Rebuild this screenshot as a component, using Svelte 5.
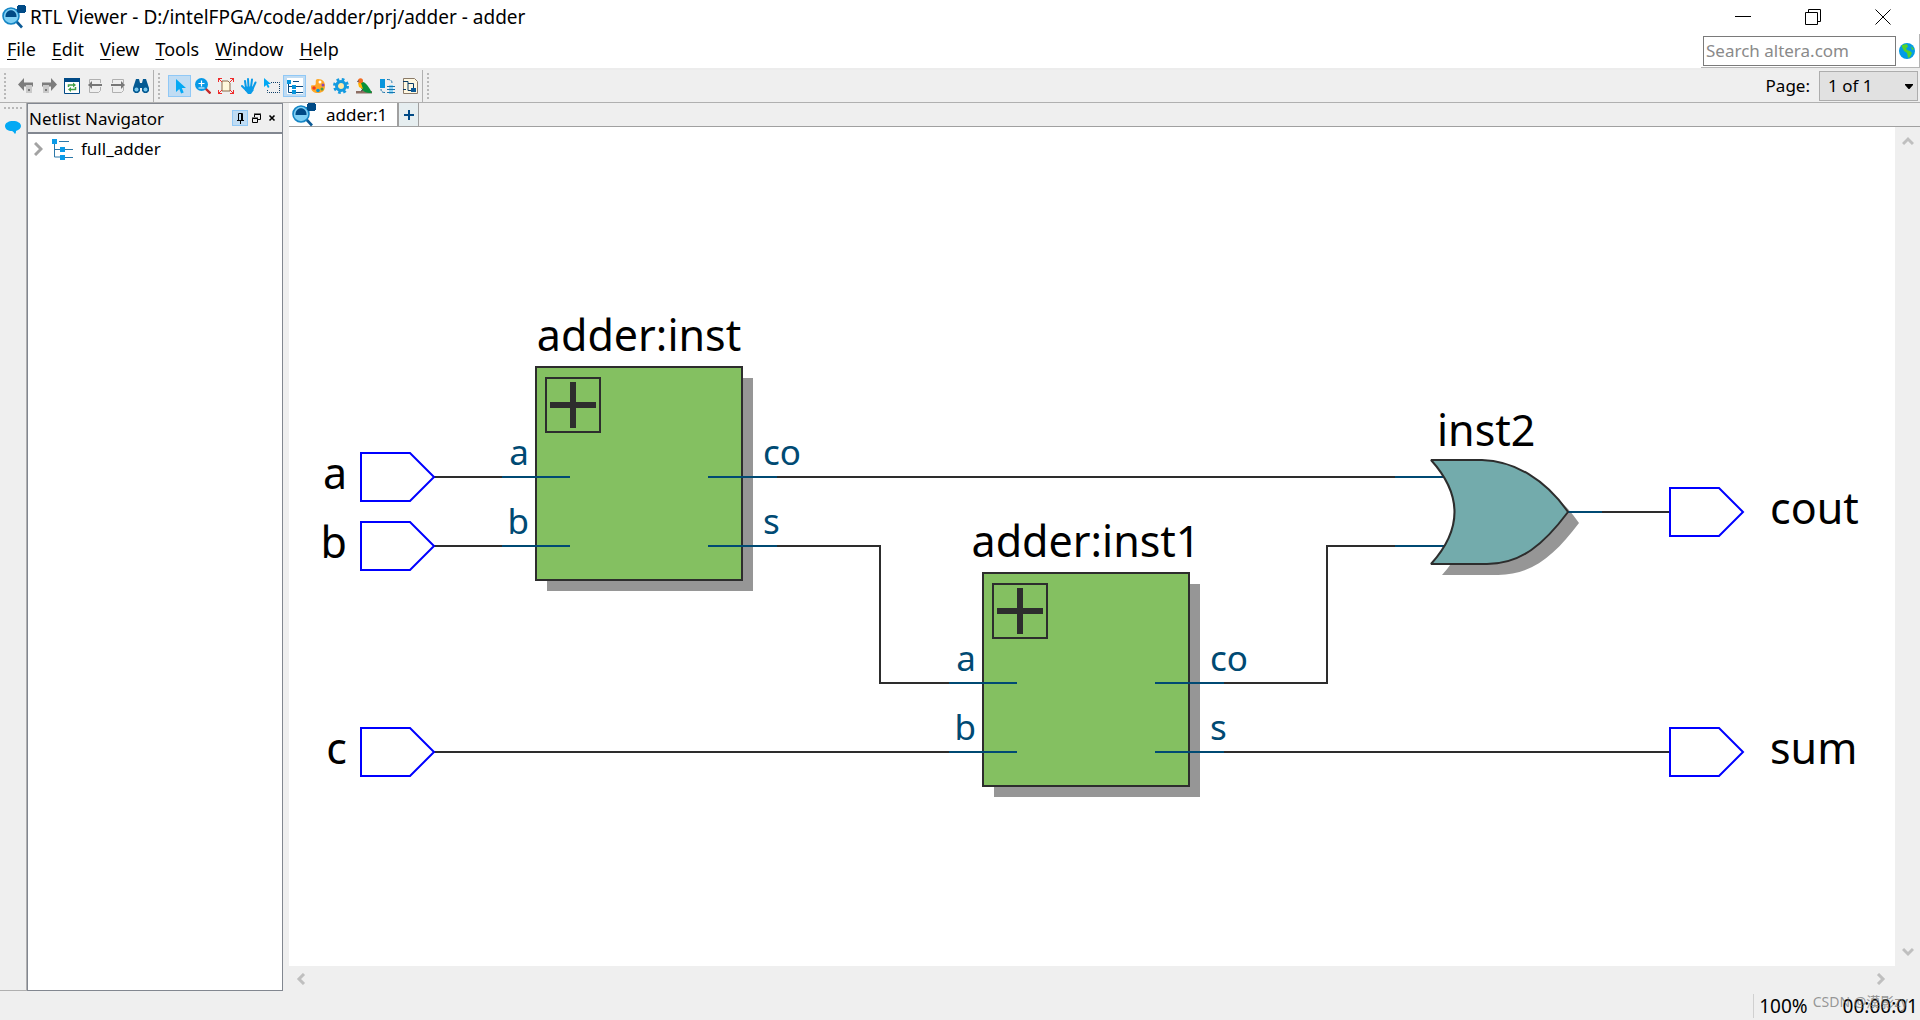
<script>
	let query = $state('');
	let page = $state('1 of 1');
	let activeTool = $state('select');
	let treeShown = $state(true);

	const menus = ['File', 'Edit', 'View', 'Tools', 'Window', 'Help'];

	const navTools = [
		{ id: 'back', label: 'Back' },
		{ id: 'forward', label: 'Forward' },
		{ id: 'refresh', label: 'Refresh' },
		{ id: 'prev', label: 'Previous page' },
		{ id: 'next', label: 'Next page' },
		{ id: 'find', label: 'Find' }
	];

	const viewTools = [
		{ id: 'select', label: 'Selection tool' },
		{ id: 'zoom', label: 'Zoom tool' },
		{ id: 'fit', label: 'Fit in window' },
		{ id: 'hand', label: 'Hand tool' },
		{ id: 'area', label: 'Area selection' },
		{ id: 'tree', label: 'Netlist Navigator' },
		{ id: 'colors', label: 'Color settings' },
		{ id: 'settings', label: 'Display settings' },
		{ id: 'bird', label: "Bird's eye view" },
		{ id: 'swap', label: 'Swap view' },
		{ id: 'sheet', label: 'Schematic' }
	];

	// schematic, all in canvas pixels
	const blocks = [
		{ name: 'adder:inst', x: 247, y: 240 },
		{ name: 'adder:inst1', x: 694, y: 446 }
	];
	const pins = [
		{ name: 'a', side: 'in', dy: 110 },
		{ name: 'b', side: 'in', dy: 179 },
		{ name: 'co', side: 'out', dy: 110 },
		{ name: 's', side: 'out', dy: 179 }
	];
	const ports = [
		{ name: 'a', x: 72, y: 350, input: true },
		{ name: 'b', x: 72, y: 419, input: true },
		{ name: 'c', x: 72, y: 625, input: true },
		{ name: 'cout', x: 1381, y: 385, input: false },
		{ name: 'sum', x: 1381, y: 625, input: false }
	];
	const wires = [
		'145,350 213,350',
		'145,419 213,419',
		'145,625 660,625',
		'488,350 1106,350',
		'488,419 591,419 591,556 660,556',
		'935,556 1038,556 1038,419 1106,419',
		'935,625 1380,625',
		'1313,385 1380,385'
	];
	const gate = 'M1142 333H1193C1226 334 1257 353 1279 385C1255 417 1232 437 1198 437H1142Q1189 385 1142 333Z';

	function pickTool(id) {
		if (id === 'tree') {
			treeShown = !treeShown;
		} else {
			activeTool = id;
		}
	}
</script>

{#snippet logo()}
	<svg class="logo" viewBox="0 0 24 24">
		<path d="M14 16l6 6.500" stroke="#0b5a96" stroke-width="2.600" />
		<path d="M14 5h5" stroke="#0b5a96" stroke-width="2" />
		<circle cx="9" cy="11" r="8" fill="#7fd0f5" stroke="#1585c5" stroke-width="1.600" />
		<path d="M3.500 12C3 3 15 3 14.500 12z" fill="#004a86" />
		<rect x="15" y="0" width="9" height="8" rx="3" fill="#004a86" />
	</svg>
{/snippet}

{#snippet icon(id)}
	<svg class="icon" viewBox="0 0 16 16">
		{#if id === 'back'}
			<path d="M0 6.500L6 0v4.500h9v4H6V13z" fill="#7d7d7d" />
			<rect x="8" y="7" width="6" height="8" fill="#c9c9c9" />
			<rect x="10" y="11" width="2" height="2" fill="#777" />
		{:else if id === 'forward'}
			<path d="M16 6.500L10 0v4.500H1v4h9V13z" fill="#7d7d7d" />
			<rect x="2" y="7" width="6" height="8" fill="#c9c9c9" />
			<rect x="4" y="11" width="2" height="2" fill="#777" />
		{:else if id === 'refresh'}
			<path d="M.5.5h15v15H.5z" fill="#fff" stroke="#004a86" />
			<path d="M0 0h16v4H0z" fill="#004a86" />
			<path d="M4.500 9V7h5M11.500 9v2.500h-5" fill="none" stroke="#43a047" stroke-width="1.500" />
			<path d="M9 4.500L12 7 9 9.500zM7 9l-3 2.500L7 14z" fill="#43a047" />
		{:else if id === 'prev' || id === 'next'}
			<path d="M2.500 5V1.500h11V5M2.500 9v5.500h9l2-2V9" fill="none" stroke="#b0b0b0" />
			{#if id === 'prev'}
				<path d="M1 7l4-4v3h10v2H5v3z" fill="#777" />
			{:else}
				<path d="M15 7l-4-4v3H1v2h10v3z" fill="#777" />
			{/if}
		{:else if id === 'find'}
			<path d="M3 1h3l1 4h2l1-4h3l3 9v3l-2 2h-3l-2-2v-3H7v3l-2 2H2l-2-2v-3z" fill="#055a92" />
			<circle cx="3.500" cy="11.500" r="2" fill="#79c8ee" />
			<circle cx="12.500" cy="11.500" r="2" fill="#79c8ee" />
		{:else if id === 'select'}
			<path d="M4 1v13l3.300-3 1.800 4.500 2.600-1-1.900-4.500H14z" fill="#03a9f4" />
		{:else if id === 'zoom'}
			<path d="M10.500 10.500l5 5" stroke="#c62828" stroke-width="2.400" />
			<circle cx="6.500" cy="6.500" r="6.500" fill="#0799e6" />
			<path d="M3.500 5.500h6M6.500 2.500v6M3.500 10h6" stroke="#fff" stroke-width="1.200" />
		{:else if id === 'fit'}
			<path d="M4 3h6l2 2v8H4z" fill="#fff8dc" stroke="#8b6b4a" />
			<path d="M0 0l4 4M16 0l-4 4M0 16l4-4M16 16l-4-4" stroke="#ef2d2d" />
			<path d="M.5 4V.5H4M12 .5h3.500V4M.5 12v3.500H4M12 15.500h3.500V12" fill="none" stroke="#ef2d2d" />
		{:else if id === 'hand'}
			<path d="M5 10L4 3M7.500 9L7 1M10 9l1-7.500M12 10l2.500-5.500M5 12L1 8" stroke="#0a9be8" stroke-width="2" stroke-linecap="round" />
			<path d="M4 8.500h9l-.5 4-2.500 3.500H7L4 12.500z" fill="#0a9be8" />
		{:else if id === 'area'}
			<path d="M0 0v9l2.300-2L4 10l1.500-1L4 6h3z" fill="#03a9f4" />
			<path d="M7 4.500h8.500v10h-12V11" fill="none" stroke="#0b3c66" stroke-dasharray="1 1" />
		{:else if id === 'tree'}
			<path d="M-1-1h18v18H-1z" fill="#fff" />
			<path d="M1.500 4v10.500h4M1.500 8.500h5M6 3.500h6M9 8.500h7M8 14.500h8" fill="none" stroke="#0b4a80" />
			<path d="M0 2h4v4H0zM5 7h4v4H5zM5 12h4v4H5z" fill="#0795dc" />
		{:else if id === 'colors'}
			<path d="M8 1c5 0 7 3 7 7 0 5-3 7-7 7S1 13 1 9c0-3 2-1 4-2S4 1 8 1z" fill="#ffa726" />
			<circle cx="10" cy="4" r="1.500" fill="#fff" />
			<circle cx="13" cy="7" r="1.500" fill="#8e44ad" />
			<circle cx="4" cy="10" r="1.800" fill="#ef3b24" />
			<circle cx="8" cy="12.500" r="1.800" fill="#0795dc" />
			<circle cx="12" cy="11" r="1.500" fill="#43a047" />
		{:else if id === 'settings'}
			<circle cx="8" cy="8" r="6.500" fill="none" stroke="#149be0" stroke-width="3" stroke-dasharray="2.600 2.500" />
			<circle cx="8" cy="8" r="4.500" fill="#ffe9a8" stroke="#149be0" stroke-width="3" />
		{:else if id === 'bird'}
			<path d="M0 13h16v2.500H0z" fill="#8d6e63" />
			<path d="M4 4c5-2 9 5 12 11-6 0-12-1-12-11z" fill="#08913b" />
			<path d="M2 5h3l2 6-4-2z" fill="#ffb300" />
			<circle cx="4.500" cy="2.800" r="2.500" fill="#f26b21" />
			<path d="M2.500 2L1 3.500l1.500 1z" fill="#444" />
			<path d="M5 13l2-1" stroke="#333" />
		{:else if id === 'swap'}
			<path d="M1 1h5v9H1z" fill="#0795dc" />
			<path d="M10 7h4v9h-4z" fill="#8ed4f5" />
			<path d="M8 8.500h8M8 11.500h8M8 14.500h8" stroke="#1976ad" />
			<path d="M8 1.500c4 0 5 1 5 4M6 14.500c-3 0-4-1-4-3.500" fill="none" stroke="#1976ad" stroke-dasharray="3 1" />
		{:else if id === 'sheet'}
			<path d="M1.500.5h11l3 3v12h-14z" fill="#fff8e1" stroke="#8a7a68" />
			<path d="M1 3.500h5v9h4M1 11.500h3M6 5.500h5.500v6" fill="none" stroke="#0b3c66" />
			<path d="M9 10h5v4H9z" fill="#0b5a96" />
		{/if}
	</svg>
{/snippet}

{#snippet chevron(direction)}
	<svg class="chevron {direction}" viewBox="0 0 12 12">
		<path d="M1 9l5-5 5 5" fill="none" stroke="#bfbfbf" stroke-width="3" />
	</svg>
{/snippet}

<div class="window">
	<header class="titlebar">
		{@render logo()}
		<h1>RTL Viewer - D:/intelFPGA/code/adder/prj/adder - adder</h1>
		<div class="winbuttons">
			<button aria-label="Minimize"><svg viewBox="0 0 16 16"><path d="M0 7.500h16" /></svg></button>
			<button aria-label="Restore"><svg viewBox="0 0 16 16"><path d="M.5 3.500h12v12H.5zM3.500 3.500V.5h12v12h-3" /></svg></button>
			<button aria-label="Close"><svg viewBox="0 0 16 16"><path d="M.5.5l15 15M15.500.5l-15 15" /></svg></button>
		</div>
	</header>

	<div class="menubar">
		<nav>
			{#each menus as menu}
				<button><u>{menu[0]}</u>{menu.slice(1)}</button>
			{/each}
		</nav>
		<form class="search">
			<input type="text" aria-label="Search altera.com" placeholder="Search altera.com" bind:value={query} />
			<button type="button" aria-label="Search">
				<svg viewBox="0 0 16 16">
					<circle cx="8" cy="8" r="8" fill="#039be5" />
					<path d="M3 2l5-1 1 3-2 1 1 2 3 1 2 2-2 4-2 1-1-5-3-2-2-4z" fill="#56d327" />
					<path d="M12 3l3 3-2 1z" fill="#56d327" />
				</svg>
			</button>
		</form>
	</div>

	<div class="toolbar">
		<div class="grip"></div>
		<div class="tools">
			{#each navTools as tool}
				<button class="tool" aria-label={tool.label}>{@render icon(tool.id)}</button>
			{/each}
		</div>
		<div class="grip"></div>
		<div class="tools">
			{#each viewTools as tool}
				<button
					class="tool"
					class:on={tool.id === activeTool || (tool.id === 'tree' && treeShown)}
					aria-label={tool.label}
					onclick={() => pickTool(tool.id)}>{@render icon(tool.id)}</button>
			{/each}
		</div>
		<div class="grip"></div>
		<label class="page" for="page">Page:</label>
		<div class="pagebox">
			<select id="page" bind:value={page}>
				<option>1 of 1</option>
			</select>
			<svg viewBox="0 0 8 5"><path d="M0 0h8v1L4.500 5h-1L0 1z" /></svg>
		</div>
	</div>

	<main>
		<aside class="strip">
			<div class="hgrip"></div>
			<button aria-label="Messages">
				<svg viewBox="0 0 16 14"><path d="M8 1c4.500 0 8 2 8 5 0 2-2 4-5 5 0 1 0 2-1 3-1-1-1-2-3-3-4 0-7-2-7-5s3.500-5 8-5z" fill="#03a9f4" /></svg>
			</button>
		</aside>

		{#if treeShown}
			<section class="dock">
				<div class="dockhead">
					<h2>Netlist Navigator</h2>
					<button class="pinned" aria-label="Pin"><svg viewBox="0 0 12 12"><path d="M4.500 8V1.500h4V8M7.500 1v7M3 8.500h7M6.500 9v3" /></svg></button>
					<button aria-label="Float"><svg viewBox="0 0 12 12"><path d="M2.500 6.500h5v4h-5zM4.500 5V2.500h6v5H8M2 6h6M4 2h7" /></svg></button>
					<button aria-label="Close panel"><svg viewBox="0 0 12 12"><path d="M3.500 3.500l5 5M8.500 3.500l-5 5" stroke-width="1.600" /></svg></button>
				</div>
				<div class="tree">
					<button class="node">
						<svg class="expand" viewBox="0 0 9 14"><path d="M1 1l6 6-6 6" fill="none" stroke="#a3a3a3" stroke-width="3" /></svg>
						<svg class="hier" viewBox="0 0 22 22">
							<path d="M2.500 4v15h6M3 11.500h18M7 3.500h10M9 19.500h12" fill="none" stroke="#2b77a8" />
							<path d="M0 1h5v5H0zM8 9h5v5H8zM8 17h5v5H8z" fill="#0a9be8" />
						</svg>
						<span>full_adder</span>
					</button>
				</div>
			</section>
		{/if}

		<section class="editor">
			<div class="tabs">
				<button class="tab">{@render logo()}<span>adder:1</span></button>
				<button class="add" aria-label="New tab"><svg viewBox="0 0 10 10"><path d="M5 0v10M0 5h10" stroke="#004a86" stroke-width="2" /></svg></button>
			</div>

			<div class="view">
				<svg class="canvas">
					<g class="wire">
						{#each wires as points}
							<polyline {points} />
						{/each}
					</g>

					{#each blocks as block}
						<rect class="shadow" x={block.x + 11} y={block.y + 11} width="206" height="213" />
						<rect class="block" x={block.x} y={block.y} width="206" height="213" />
						<rect class="expander" x={block.x + 10} y={block.y + 11} width="54" height="54" />
						<path class="plus" d="M{block.x + 14} {block.y + 38}h46m-23-23v46" />
						<text class="name middle" x={block.x + 103} y={block.y - 16}>{block.name}</text>
						{#each pins as pin}
							{#if pin.side === 'in'}
								<path class="pin" d="M{block.x - 34} {block.y + pin.dy}h68" />
								<text class="pinname end" x={block.x - 7} y={block.y + pin.dy - 12}>{pin.name}</text>
							{:else}
								<path class="pin" d="M{block.x + 172} {block.y + pin.dy}h69" />
								<text class="pinname" x={block.x + 227} y={block.y + pin.dy - 12}>{pin.name}</text>
							{/if}
						{/each}
					{/each}

					<path class="shadow" d={gate} transform="translate(11 11)" />
					<path class="pin" d="M1106 350h50M1106 419h50M1279 385h34" />
					<path class="gate" d={gate} />
					<text class="name" x="1148" y="319">inst2</text>

					{#each ports as port}
						<path class="port" d="M{port.x} {port.y - 24}h49l24 24-24 24h-49z" />
						{#if port.input}
							<text class="name end" x={port.x - 14} y={port.y + 12}>{port.name}</text>
						{:else}
							<text class="name" x={port.x + 100} y={port.y + 12}>{port.name}</text>
						{/if}
					{/each}
				</svg>
				<div class="vscroll">
					{@render chevron('up')}
					{@render chevron('down')}
				</div>
				<div class="hscroll">
					{@render chevron('left')}
					{@render chevron('right')}
				</div>
			</div>
		</section>
	</main>

	<footer>
		<span class="zoomlevel">100%</span>
		<span>00:00:01</span>
		<span class="watermark">CSDN @漠影zy</span>
	</footer>
</div>

<style>
	:global(body) {
		margin: 0;
	}
	.window {
		display: flex;
		flex-direction: column;
		height: 100vh;
		overflow: hidden;
		background: #efefef;
		color: #000;
		font-family: "Noto Sans", "Noto Sans CJK SC", sans-serif;
		font-size: 17px;
		line-height: 24px;
	}
	button, input, select {
		margin: 0;
		padding: 0;
		border: 0;
		background: none;
		color: inherit;
		font: inherit;
	}
	svg {
		display: block;
		flex: none;
	}
	h1, h2 {
		margin: 0;
		font-size: inherit;
		font-weight: normal;
	}
	.logo {
		width: 24px;
		height: 24px;
	}

	.titlebar {
		display: flex;
		align-items: center;
		gap: 4px;
		height: 34px;
		padding: 0 2px;
		background: #fff;
	}
	.titlebar h1 {
		flex: 1;
		font-size: 19px;
	}
	.winbuttons {
		display: flex;
	}
	.winbuttons button {
		display: grid;
		place-items: center;
		width: 70px;
		height: 34px;
	}
	.winbuttons svg {
		width: 16px;
		height: 16px;
		fill: none;
		stroke: #000;
	}

	.menubar {
		display: flex;
		justify-content: space-between;
		height: 34px;
		border-bottom: 2px solid #ececec;
		background: #fff;
	}
	nav {
		display: flex;
		align-items: center;
		gap: 16px;
		padding: 0 0 4px 7px;
		font-size: 18px;
	}
	u {
		text-underline-offset: 3px;
	}
	.search {
		display: flex;
		align-items: center;
		gap: 3px;
		padding: 0 4px 0 2px;
		border-right: 1px solid #b5b5b5;
		border-bottom: 1px solid #b5b5b5;
	}
	.search input {
		box-sizing: border-box;
		width: 193px;
		height: 30px;
		padding: 0 2px;
		border: 1px solid #7a7a7a;
	}
	.search input::placeholder {
		color: #8a8a8a;
		opacity: 1;
	}
	.search svg {
		width: 16px;
		height: 16px;
	}

	.toolbar {
		display: flex;
		align-items: center;
		height: 32px;
		border-bottom: 1px solid #b0b0b0;
	}
	.grip {
		width: 2px;
		height: 26px;
		margin: 0 8px 0 4px;
		background: repeating-linear-gradient(#b8b8b8 0 2px, transparent 2px 4px);
	}
	.tools {
		display: flex;
		align-items: center;
		height: 32px;
		padding-right: 1px;
		border-right: 1px solid #b0b0b0;
	}
	.tool {
		box-sizing: border-box;
		display: grid;
		place-items: center;
		width: 23px;
		height: 22px;
		border: 1px solid transparent;
	}
	.tool.on {
		border-color: #90c8f6;
		background: #c0dcf3;
	}
	.icon {
		width: 16px;
		height: 16px;
	}
	.page {
		margin-left: auto;
	}
	.pagebox {
		display: grid;
		align-items: center;
		margin: 0 2px 0 9px;
	}
	.pagebox select {
		grid-area: 1 / 1;
		width: 99px;
		height: 30px;
		padding: 0 8px;
		appearance: none;
		border: 1px solid #adadad;
		border-radius: 0;
		background: #e1e1e1;
	}
	.pagebox svg {
		grid-area: 1 / 1;
		justify-self: end;
		width: 8px;
		height: 5px;
		margin-right: 5px;
		pointer-events: none;
	}

	main {
		display: flex;
		flex: 1;
		min-height: 0;
	}
	.strip {
		display: flex;
		flex-direction: column;
		align-items: center;
		gap: 11px;
		box-sizing: border-box;
		width: 27px;
		padding-top: 4px;
		border-right: 1px solid #b0b0b0;
		border-bottom: 1px solid #b0b0b0;
	}
	.hgrip {
		width: 18px;
		height: 2px;
		background: repeating-linear-gradient(90deg, #b8b8b8 0 2px, transparent 2px 4px);
	}
	.strip svg {
		width: 16px;
		height: 14px;
	}
	.dock {
		display: flex;
		flex-direction: column;
		box-sizing: border-box;
		width: 256px;
		border: 1px solid #828790;
	}
	.dockhead {
		display: flex;
		align-items: center;
		height: 28px;
		padding: 0 2px 0 1px;
		border-bottom: 2px solid #828790;
	}
	.dockhead h2 {
		flex: 1;
		padding-top: 2px;
	}
	.dockhead button {
		display: grid;
		place-items: center;
		width: 16px;
		height: 16px;
	}
	.dockhead svg {
		width: 12px;
		height: 12px;
		fill: none;
		stroke: #000;
	}
	.dockhead .pinned {
		background: #c0dcf3;
		outline: 1px solid #90c8f6;
		outline-offset: -1px;
	}
	.tree {
		flex: 1;
		padding: 3px 6px;
		background: #fff;
	}
	.node {
		display: flex;
		align-items: center;
	}
	.expand {
		width: 9px;
		height: 14px;
		margin-right: 9px;
	}
	.hier {
		width: 22px;
		height: 22px;
		margin-right: 7px;
	}

	.editor {
		display: flex;
		flex: 1;
		flex-direction: column;
		min-width: 0;
		padding-left: 6px;
	}
	.tabs {
		display: flex;
		height: 23px;
		border-bottom: 1px solid #a0a0a0;
	}
	.tab {
		display: flex;
		align-items: center;
		gap: 10px;
		box-sizing: border-box;
		width: 109px;
		padding-left: 3px;
		border-right: 1px solid #a0a0a0;
		background: #fff;
	}
	.add {
		display: grid;
		place-items: center;
		width: 21px;
		border: 1px solid #a0a0a0;
		border-width: 0 1px;
		background: #e6eef0;
	}
	.add svg {
		width: 10px;
		height: 10px;
	}
	.view {
		display: grid;
		flex: 1;
		grid-template: minmax(0, 1fr) 25px / minmax(0, 1fr) 25px;
		min-height: 0;
	}
	.canvas {
		width: 100%;
		height: 100%;
		background: #fff;
	}
	.vscroll, .hscroll {
		display: flex;
		align-items: center;
		justify-content: space-between;
	}
	.vscroll {
		flex-direction: column;
		padding: 8px 0;
	}
	.hscroll {
		padding: 0 8px 0 6px;
	}
	.chevron {
		width: 12px;
		height: 12px;
	}
	.down {
		transform: rotate(180deg);
	}
	.left {
		transform: rotate(-90deg);
	}
	.right {
		transform: rotate(90deg);
	}

	polyline, rect, .pin, .plus {
		shape-rendering: crispEdges;
	}
	.wire, .pin, .plus, .port {
		fill: none;
		stroke-width: 2;
	}
	.wire {
		stroke: #2d2d2d;
	}
	.pin {
		stroke: #004a73;
	}
	.port {
		stroke: #00f;
	}
	.shadow {
		fill: #969696;
	}
	.block {
		fill: #84c061;
		stroke: #2d2d2d;
		stroke-width: 2;
	}
	.gate {
		fill: #73abac;
		stroke: #2d2d2d;
		stroke-width: 2;
		stroke-linejoin: bevel;
	}
	.expander {
		fill: none;
		stroke: #2d2d2d;
		stroke-width: 2;
	}
	.plus {
		stroke: #2d2d2d;
		stroke-width: 6;
	}
	.name {
		font-size: 43px;
	}
	.pinname {
		fill: #004a73;
		font-size: 35px;
	}
	.middle {
		text-anchor: middle;
	}
	.end {
		text-anchor: end;
	}

	footer {
		position: relative;
		display: flex;
		align-items: center;
		justify-content: flex-end;
		gap: 35px;
		height: 29px;
		padding-right: 2px;
		font-size: 19px;
	}
	.zoomlevel {
		padding-left: 5px;
		border-left: 1px solid #d0d0d0;
	}
	.watermark {
		position: absolute;
		right: 12px;
		bottom: 6px;
		color: rgba(110, 110, 110, 0.7);
		font-size: 14px;
	}
</style>
